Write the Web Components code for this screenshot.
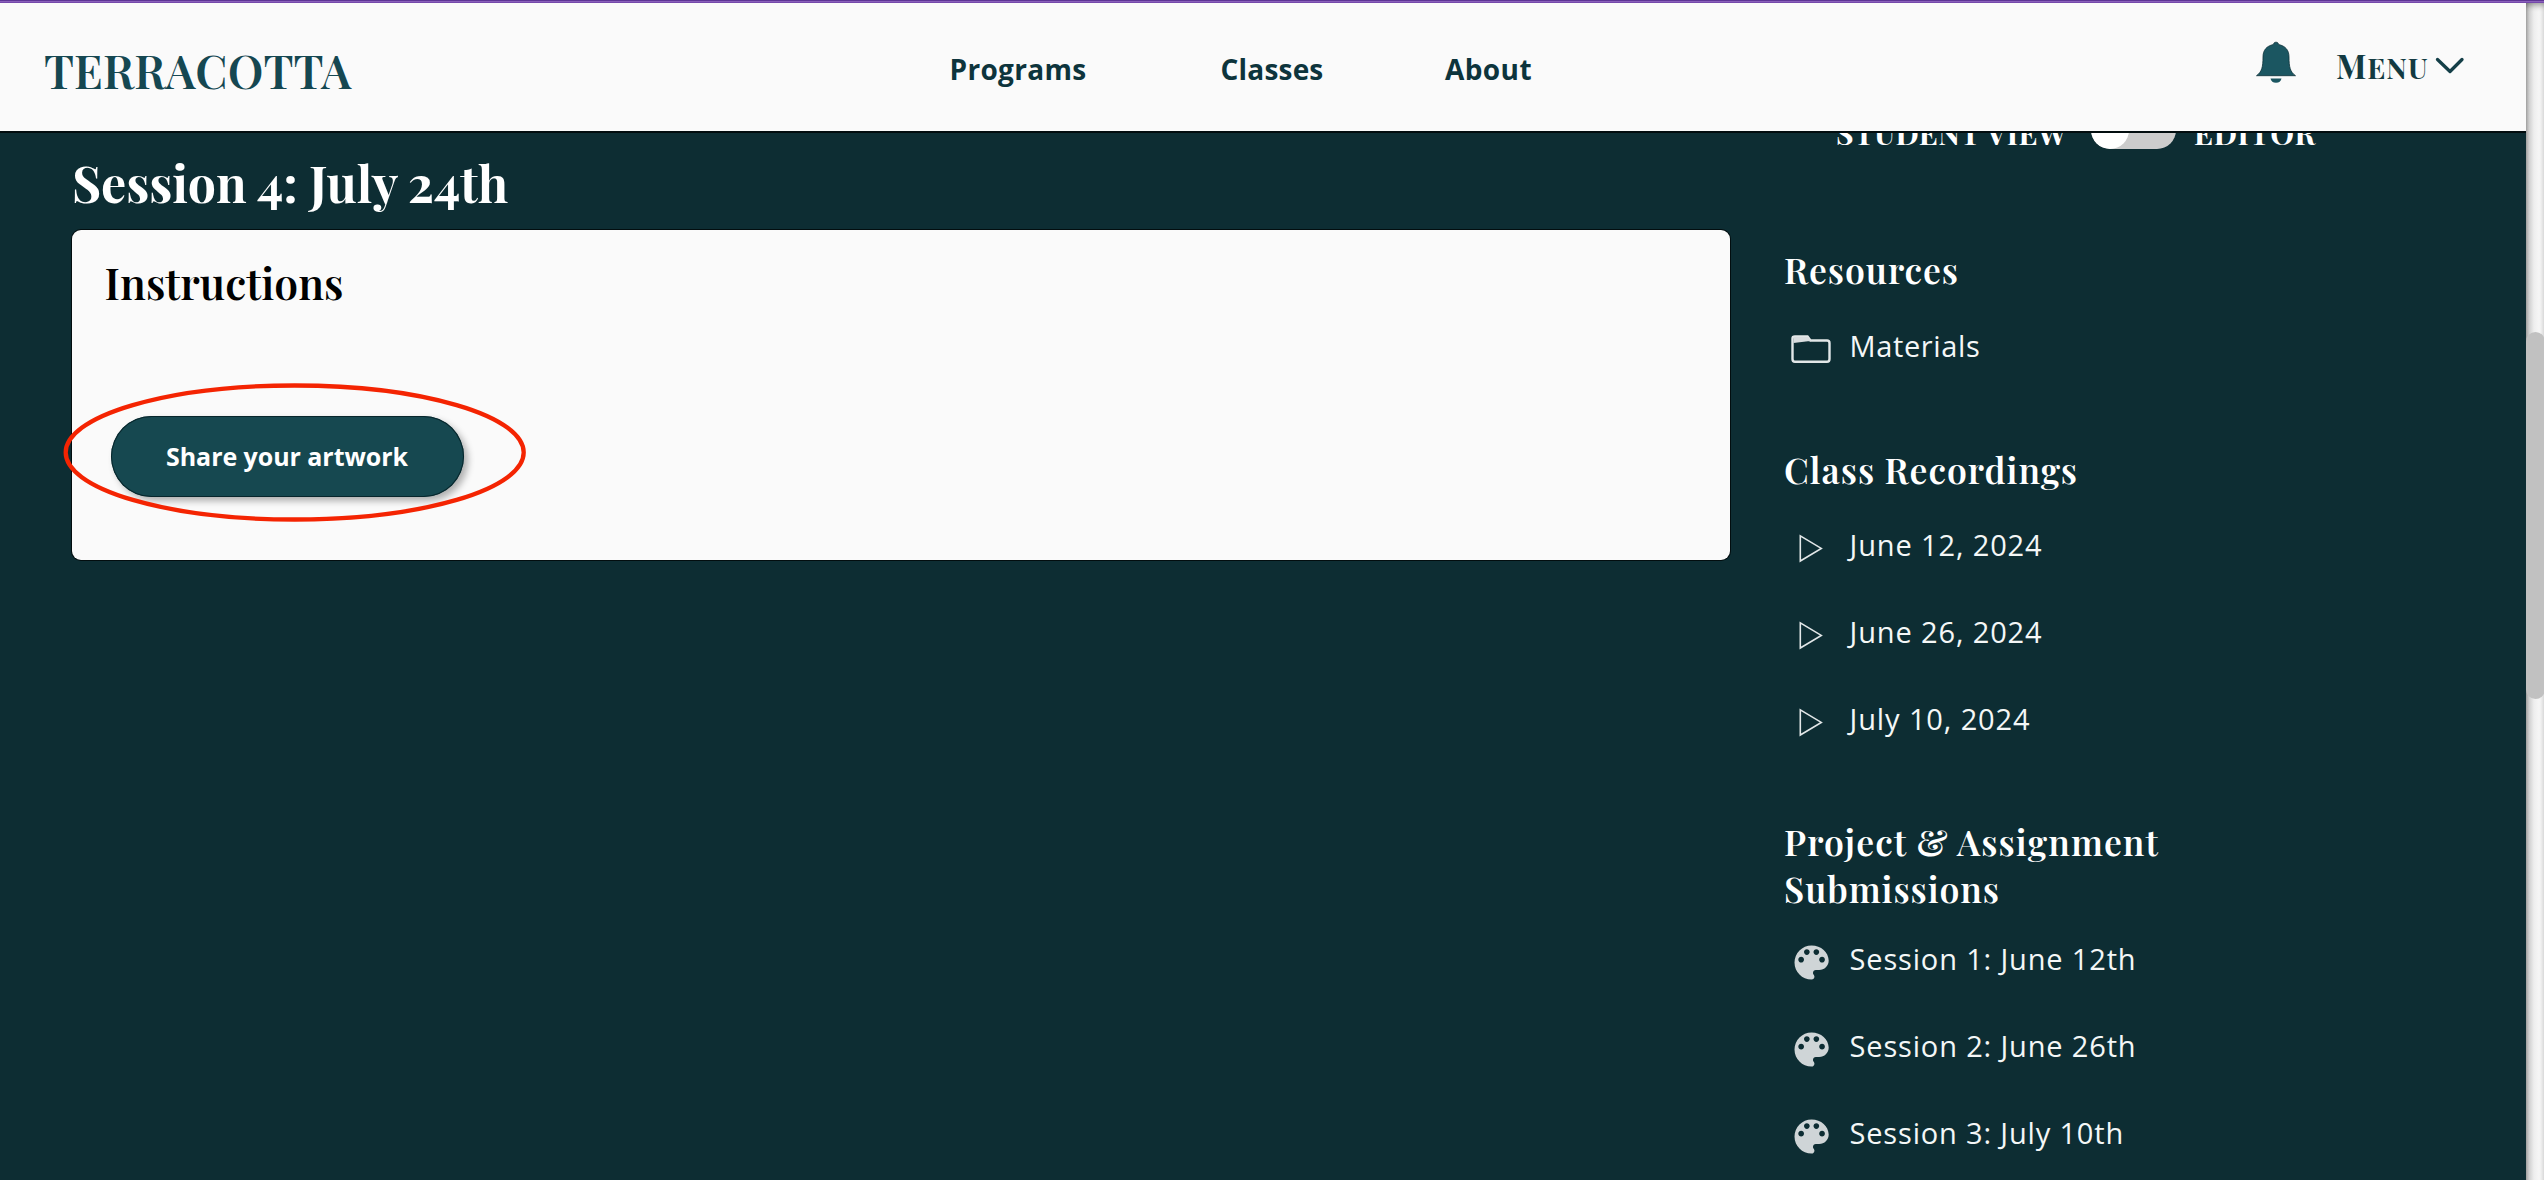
<!DOCTYPE html>
<html lang="en">
<head>
<meta charset="utf-8">
<title>Terracotta</title>
<style>
html,body{margin:0;height:100%;overflow:hidden;background:#0d2d33}
</style>
</head>
<body>
<tc-app></tc-app>
<script>
const make=(name,html,setup)=>customElements.define(name,class extends HTMLElement{
  connectedCallback(){
    if(this.shadowRoot)return;
    this.attachShadow({mode:'open'}).innerHTML=html;
    if(setup)setup(this,this.shadowRoot);
  }
});

// One line of type, tracked to a fixed measure.
make('tc-type',`<style>
:host{display:block;white-space:nowrap;flex:none;font-family:"Playfair Display","Liberation Serif",serif;font-weight:700}
:host([sans]){font-family:"Open Sans","Noto Sans",sans-serif;font-weight:400}
:host([sans][bold]){font-weight:700}
:host([semi]){font-weight:600}
span{display:inline-block}
:host([caps]) span::first-letter{font-size:1.15em}
</style><span><slot></slot></span>`,(host,root)=>{
  const s=root.querySelector('span');
  const a=n=>parseFloat(host.getAttribute(n));
  host.style.fontSize=a('size')+'px';
  host.style.lineHeight=a('lh')+'px';
  host.style.height=a('lh')+'px';
  s.style.height=a('lh')+'px';
  s.style.verticalAlign='top';
  if(host.hasAttribute('caps')){s.textContent=host.textContent;}
  const w=a('w'),nat=s.getBoundingClientRect().width,n=host.textContent.length;
  s.style.letterSpacing=((w-nat)/n)+'px';
  host.style.width=w+'px';
});

const icons={
 folder:`<svg width="48" height="40" viewBox="0 0 48 40"><path d="M8.500 14V12.500Q8.500 10.500 11 10.500H23.500L26.500 14.500H43Q45.500 14.500 45.500 17V33Q45.500 35.800 43 35.800H11Q8.500 35.800 8.500 33Z" fill="none" stroke="#e2e7e8" stroke-width="2.400"/><path d="M9.500 11H24L27 15.300H24L9.500 17Z" fill="#d9dddf"/></svg>`,
 play:`<svg width="42" height="40" viewBox="0 0 42 40"><path d="M16.300 10.800V36L37.300 23.400Z" fill="none" stroke="#e2e7e8" stroke-width="1.600"/></svg>`,
 palette:`<svg width="45" height="41" viewBox="0 0 45 41"><path transform="translate(4.800 .700) scale(1.900)" fill="#cfd5d7" d="M12 3c-4.970 0-9 4.030-9 9s4.030 9 9 9c.83 0 1.500-.67 1.500-1.500 0-.39-.15-.74-.39-1.010-.23-.26-.38-.61-.38-.99 0-.83.67-1.500 1.500-1.500H16c2.760 0 5-2.240 5-5 0-4.420-4.030-8-9-8zm-5.500 9c-.83 0-1.500-.67-1.500-1.500S5.670 9 6.500 9 8 9.670 8 10.500 7.330 12 6.500 12zm3-4C8.670 8 8 7.330 8 6.500S8.670 5 9.500 5s1.500.67 1.500 1.500S10.330 8 9.500 8zm5 0c-.83 0-1.500-.67-1.500-1.500S13.670 5 14.500 5s1.500.67 1.500 1.500S15.330 8 14.500 8zm3 4c-.83 0-1.500-.67-1.500-1.500S16.670 9 17.500 9s1.500.67 1.500 1.500-.67 1.500-1.500 1.500z"/></svg>`
};
make('tc-item',`<style>
:host{display:flex;height:40px;color:#f4f7f7}
i{display:block;width:65.500px;flex:none}
svg{display:block;overflow:visible}
</style><i></i><slot></slot>`,(h,r)=>{r.querySelector('i').innerHTML=icons[h.getAttribute('icon')]});

make('tc-section',`<style>
:host{display:block;color:#fff}
.list{display:flex;flex-direction:column;gap:47px;margin-top:var(--gap,32px)}
</style><slot name="title"></slot><div class="list"><slot></slot></div>`);

make('tc-toggle',`<style>
:host{display:block;box-sizing:border-box;width:85px;height:38px;border-radius:19px;background:#ccc;flex:none;overflow:hidden}
b{display:block;width:38px;height:38px;border-radius:50%;background:#fff}
</style><b></b>`);

make('tc-header',`<style>
:host{display:block;position:relative;z-index:2;height:128px;background:#fafafa;color:#123a42;box-shadow:0 2px 0 #020d0f}
.bar{display:flex;align-items:flex-start;padding-left:44px}
nav{display:flex;margin:46px 0 0 598px;gap:134px;color:#0d343c}
nav tc-type:last-child{margin-left:-12.500px}
.logo{margin-top:36.500px;color:#154751}
.bell{margin:38px 0 0 723px;display:block}
.menu{margin:42.500px 0 0 39px}
.chev{margin:53px 0 0 6px;display:block}
</style><div class="bar">
<tc-type class="logo" semi size="46" lh="60" w="307.500">TERRACOTTA</tc-type>
<nav><tc-type sans bold size="28" lh="40" w="137">Programs</tc-type><tc-type sans bold size="28" lh="40" w="103">Classes</tc-type><tc-type sans bold size="28" lh="40" w="87">About</tc-type></nav>
<svg class="bell" width="42" height="44" viewBox="0 0 42 44"><path fill="#1b5661" stroke="#0d3138" stroke-width=".8" d="M21 1.200C22.500 1.200 23.300 2 23.600 3.500C30.500 5 34 9.200 34 16C34 26 35.200 31 40.500 34.700H1.500C6.800 31 8 26 8 16C8 9.200 11.500 5 18.400 3.500C18.700 2 19.500 1.200 21 1.200Z"/><path fill="#1b5661" d="M15.500 37.500H26.500C26 40.300 24 41.800 21 41.800S16 40.300 15.500 37.500Z"/></svg>
<tc-type class="menu" caps size="28.500" lh="40" w="92.500">MENU</tc-type>
<svg class="chev" width="30" height="20" viewBox="0 0 30 20"><path d="M2.500 3.500L15 15.500L27 3.500" fill="none" stroke="#143f48" stroke-width="3.300" stroke-linecap="round" stroke-linejoin="round"/></svg>
</div>`);

make('tc-button',`<style>
:host{display:block;position:relative;width:354px;height:81px}
button{all:unset;box-sizing:border-box;display:flex;align-items:flex-start;width:353.500px;height:81px;border-radius:41px;background:#164850;color:#fff;padding:20.500px 0 0 55.500px;box-shadow:0 0 0 1px #07262c inset,4px 4px 7px rgba(0,0,0,.3)}
.ring{position:absolute;left:-49px;top:-34px;overflow:visible}
</style><button><slot></slot></button>
<svg class="ring" width="466" height="142" viewBox="0 0 466 142"><ellipse cx="232.700" cy="70.500" rx="229" ry="67" fill="none" stroke="#f42402" stroke-width="4.300"/></svg>`);

make('tc-card',`<style>
:host{display:block;box-sizing:border-box;width:1658px;height:330px;background:#fafafa;border-radius:9px;padding:22.500px 0 0 32.500px;color:#000;box-shadow:0 0 0 1px #020d0f}
.body{margin:103px 0 0 6px}
</style><slot name="title"></slot><div class="body"><slot></slot></div>`);

make('tc-scroll',`<style>
:host{display:block;height:1177px;background:linear-gradient(90deg,#aaa 0,#cfcfcf 3px,#eee 8px,#f6f6f6 13px,#e8e8e8 18px);box-sizing:border-box;padding-top:329px;overflow:hidden;box-shadow:inset 0 5px 6px -3px rgba(0,0,0,.4)}
b{display:block;height:367px;width:19px;background:#c1c1c1;border-radius:10px}
</style><b></b>`);

make('tc-app',`<style>
:host{display:block;width:2544px;height:1180px;overflow:hidden;background:#0d2d33;color:#fff}
.top{height:3px;background:linear-gradient(#5d3595 0 1px,#8a60ba 1px 2px,#7548ab 2px)}
.shell{display:grid;grid-template-columns:2526px 18px}
.page{height:1177px;overflow:hidden}
main{display:flex;align-items:flex-start;padding-left:72px}
.left{width:1658px;padding-top:22px}
.left>tc-type{margin:0 0 17px 0}
aside{width:600px;margin:-20px 0 0 54px}
.modes{display:flex;height:38px;margin:0 0 98px 52px}
.modes tc-type{margin-top:3px}
.modes tc-toggle{margin:0 18px 0 24px}
tc-section+tc-section{margin-top:80.500px}
tc-section.p{--gap:27px}
.two{display:flex;flex-direction:column}
</style>
<div class="top"></div>
<div class="shell"><div class="page">
<tc-header></tc-header>
<main>
<div class="left"><tc-type size="50" lh="60" w="436">Session 4: July 24th</tc-type>
<tc-card><tc-type semi slot="title" size="42.500" lh="60" w="239">Instructions</tc-type>
<tc-button><tc-type sans bold size="25" lh="40" w="242">Share your artwork</tc-type></tc-button></tc-card></div>
<aside>
<div class="modes"><tc-type size="30" lh="38" w="231">STUDENT VIEW</tc-type><tc-toggle></tc-toggle><tc-type size="30" lh="38" w="122">EDITOR</tc-type></div>
<tc-section><tc-type semi slot="title" size="35.500" lh="46" w="175">Resources</tc-type>
<tc-item icon="folder" style="margin-top:1px"><tc-type sans size="29" lh="40" w="131">Materials</tc-type></tc-item></tc-section>
<tc-section><tc-type semi slot="title" size="35.500" lh="46" w="294">Class Recordings</tc-type>
<tc-item icon="play"><tc-type sans size="29" lh="40" w="193">June 12, 2024</tc-type></tc-item>
<tc-item icon="play"><tc-type sans size="29" lh="40" w="193">June 26, 2024</tc-type></tc-item>
<tc-item icon="play"><tc-type sans size="29" lh="40" w="181">July 10, 2024</tc-type></tc-item></tc-section>
<tc-section class="p"><div class="two" slot="title"><tc-type semi size="35.500" lh="46.500" w="375">Project &amp; Assignment</tc-type><tc-type semi size="35.500" lh="46.500" w="216">Submissions</tc-type></div>
<tc-item icon="palette"><tc-type sans size="29" lh="40" w="287">Session 1: June 12th</tc-type></tc-item>
<tc-item icon="palette"><tc-type sans size="29" lh="40" w="287">Session 2: June 26th</tc-type></tc-item>
<tc-item icon="palette"><tc-type sans size="29" lh="40" w="274.500">Session 3: July 10th</tc-type></tc-item></tc-section>
</aside>
</main></div>
<tc-scroll></tc-scroll></div>`);
</script>
</body>
</html>
